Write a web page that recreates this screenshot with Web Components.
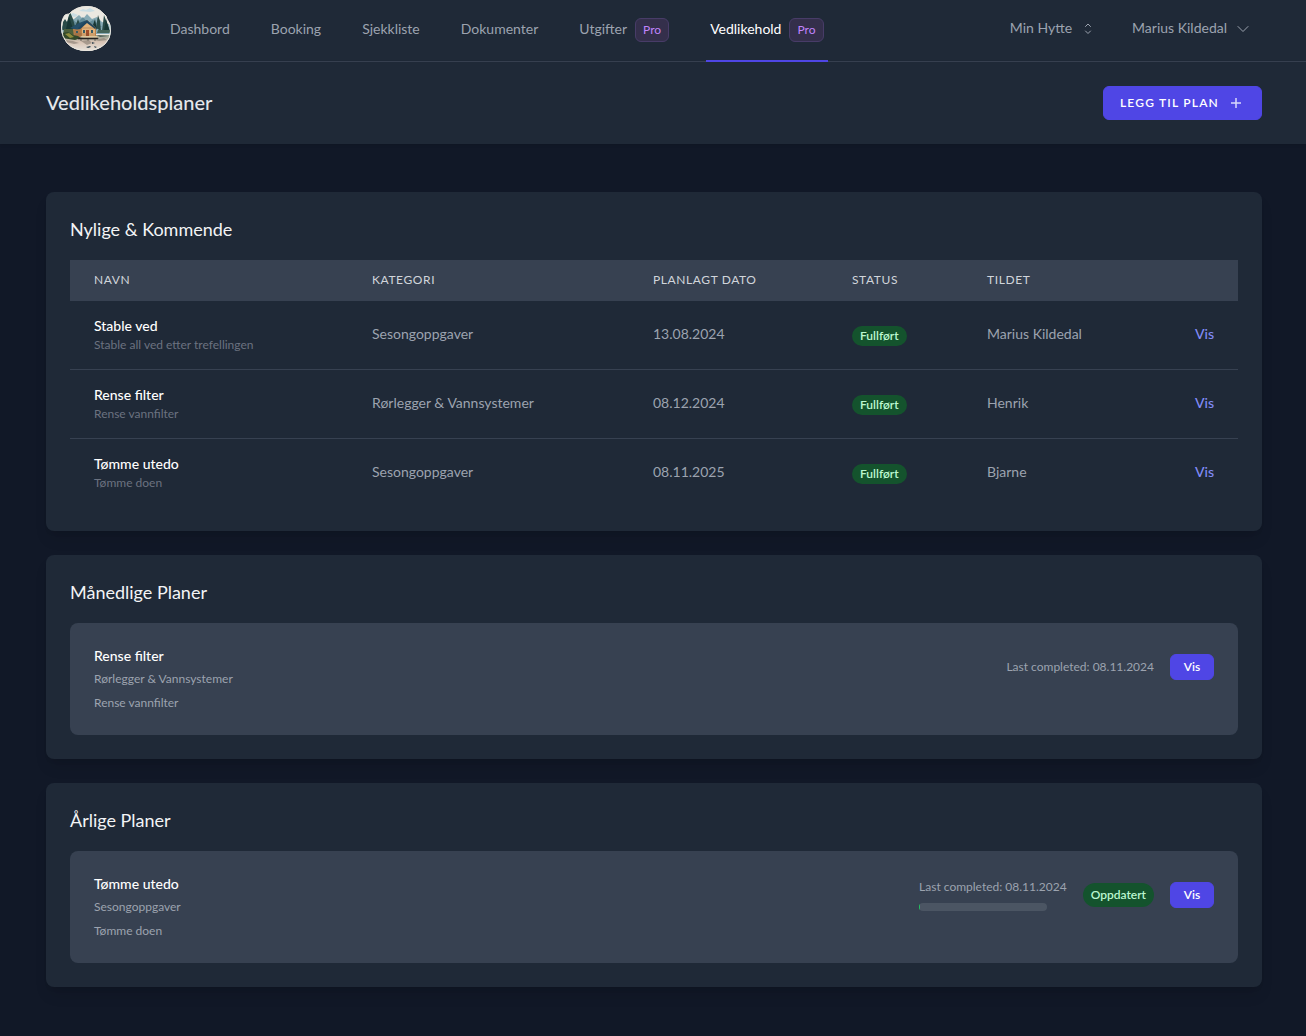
<!DOCTYPE html>
<html lang="nb">
<head>
<meta charset="utf-8">
<meta name="viewport" content="width=device-width, initial-scale=1">
<title>Vedlikeholdsplaner</title>
<style>
:root{--bg:#111827;--surface:#1f2937;--raised:#374151;--line:#374151;--accent:#4f46e5;--muted:#9ca3af;--dim:#6b7280;--text:#f3f4f6}
*{box-sizing:border-box}
body{margin:0;background:var(--bg);color:var(--text);font-family:Lato,"Open Sans",sans-serif;font-size:14px;line-height:20px;min-height:100vh}
main{display:flex;flex-direction:column;gap:24px;padding:48px 44px 48px 46px}
</style>
</head>
<body>
<site-nav>
  <nav-link>Dashbord</nav-link>
  <nav-link>Booking</nav-link>
  <nav-link>Sjekkliste</nav-link>
  <nav-link>Dokumenter</nav-link>
  <nav-link pro>Utgifter</nav-link>
  <nav-link pro active>Vedlikehold</nav-link>
  <menu-button slot="end" icon="updown">Min Hytte</menu-button>
  <menu-button slot="end" icon="down">Marius Kildedal</menu-button>
</site-nav>
<page-header>Vedlikeholdsplaner<add-button slot="action">Legg til plan</add-button></page-header>
<main>
  <panel-card heading="Nylige &amp; Kommende"><plan-table></plan-table></panel-card>
  <panel-card heading="Månedlige Planer">
    <plan-item name="Rense filter" category="Rørlegger &amp; Vannsystemer" note="Rense vannfilter" completed="08.11.2024"></plan-item>
  </panel-card>
  <panel-card heading="Årlige Planer">
    <plan-item name="Tømme utedo" category="Sesongoppgaver" note="Tømme doen" completed="08.11.2024" progress="1" status="Oppdatert"></plan-item>
  </panel-card>
</main>
<script>
const base = '*{box-sizing:border-box}';
class Base extends HTMLElement {
  connectedCallback() {
    if (this.shadowRoot) return;
    this.attachShadow({mode: 'open'}).innerHTML = '<style>' + base + '</style>' + this.render();
  }
}

customElements.define('cabin-logo', class extends Base {
  render() { return `<style>:host{display:block;width:50px;height:46px}svg{display:block}</style>
<svg width="50" height="46" viewBox="0 0 50 46" role="img" aria-label="Hytte">
  <defs>
    <clipPath id="c"><path d="M8 8Q15 0 26 0Q36 0 42 7Q46 10 46 13Q50 17 50 25Q50 32 44 38Q37 45 26 45Q13 45 6 37Q0 30 0 22Q0 13 4 9Q6 8 8 8Z"/></clipPath>
    <linearGradient id="w" x1="0" y1="0" x2="0" y2="1"><stop offset="0" stop-color="#8e9c8c"/><stop offset=".4" stop-color="#d8c3b4"/><stop offset="1" stop-color="#e9e6e0"/></linearGradient>
  </defs>
  <g clip-path="url(#c)">
    <rect width="50" height="46" fill="#ebe8e1"/>
    <path d="M18 5l4-2 3 1 4-2 5 3-5 1zM7 10l5-3 5 2-3 2z" fill="#c9dde3"/>
    <path d="M0 21l8-7 5-1 5-4 4 4 4-5 5 5 5-2 5 5 9 3v9H0z" fill="#87aab5"/>
    <path d="M7 20l5-6 4 3 6-6 5 6 5-3 9 7z" fill="#638b98"/>
    <path d="M2 16l2-3 2 3 3-10 3 7 3 11H1zM14 21l3-8 3 8zM35 22l2-13 2 6 1 10zM41 25l2-16 3 8 3 9z" fill="#294a47"/>
    <path d="M5 23l3-13 4 13zM43 25l2-12 4 13zM32 19l2-6 2 11z" fill="#183735"/>
    <path d="M3 23h12l3 8H2z" fill="#4c5f3c"/>
    <path d="M37 24h12v3H36z" fill="#46655a"/>
    <rect x="1" y="29" width="48" height="17" fill="url(#w)"/>
    <path d="M12 23l7-3 7-6 9 8v9H13z" fill="#bd8148"/>
    <path d="M21 22l5-6 8 6v9H21z" fill="#e2b27a"/>
    <path d="M9 22l9-5 8-3-6 8-3 2z" fill="#264f68"/>
    <path d="M17 22l9-8 9 8-1 1-8-6-8 7z" fill="#1e4660"/>
    <path d="M13 24l7-1v7h-7z" fill="#b07a4a"/>
    <path d="M25 24h3v6h-3z" fill="#a24d29"/>
    <path d="M30 24h2v3h-2zM22 24h2v3h-2zM15 25h2v2h-2z" fill="#385b63"/>
    <path d="M14 28h20M14 30h20M21 22h12" stroke="#7c5335" stroke-width=".4"/>
    <path d="M1 27l6-1 5 3 5 1 3 2-6 2-13-2z" fill="#33492a"/>
    <path d="M4 28l4-1 5 4-4 1z" fill="#8e8c3d"/>
    <path d="M19 30h17l1 2-13 1z" fill="#dec79e"/>
    <path d="M17 32h20v1H17zM20 33v2M27 33v2M34 33v2" stroke="#413e36" stroke-width=".7"/>
    <path d="M4 34l8 1 6 2-5 1-8-2zM20 35l8-1 3 3-5 2zM34 34l9-2 3 2-8 1z" fill="#8c8176" opacity=".65"/>
    <path d="M25 41l4-1 1 1-3 1zM33 40l3 1-2 1zM31 36l3 1-3 1z" fill="#354752"/>
    <path d="M36 29l11 1-8 1zM41 32l5 1" fill="#546158"/>
  </g>
  <path d="M8 8Q15 .5 26 .5Q36 .5 42 7Q46 10 46 13Q49.500 17 49.500 25Q49.500 32 44 38Q37 44.500 26 44.500Q13 44.500 6 37Q.5 30 .5 22Q.5 13 4 9Q6 8 8 8Z" fill="none" stroke="#e9e5dd"/>
</svg>`; }
});

customElements.define('site-nav', class extends Base {
  render() { return `<style>
:host{display:block;background:var(--surface);border-bottom:1px solid var(--line)}
nav{display:flex;height:61px;padding:0 51px 0 61px}
.logo{padding-top:6px;margin-right:55px}
.links{display:flex;gap:33px}
.end{display:flex;align-items:center;gap:28px;margin-left:auto;padding-bottom:6px}
</style><nav aria-label="Hovedmeny"><cabin-logo class="logo"></cabin-logo><div class="links"><slot></slot></div><div class="end"><slot name="end"></slot></div></nav>`; }
});

customElements.define('nav-link', class extends Base {
  render() { const on = this.hasAttribute('active'); return `<style>
:host{display:flex}
a{display:flex;align-items:center;gap:8px;height:62px;padding:0 4px 2px;color:${on ? '#fff' : 'var(--muted)'};text-decoration:none;border-top:2px solid transparent;border-bottom:2px solid ${on ? 'var(--accent)' : 'transparent'};white-space:nowrap}
.label{padding-bottom:2px}
.pro{font-size:12px;line-height:16px;padding:3px 7px;border:1px solid #483c68;border-radius:6px;background:#342f4b;color:#c084fc}
</style><a href="#"${on ? ' aria-current="page"' : ''}><span class="label"><slot></slot></span>${this.hasAttribute('pro') ? '<span class="pro">Pro</span>' : ''}</a>`; }
});

customElements.define('menu-button', class extends Base {
  render() { const ud = this.getAttribute('icon') === 'updown'; return `<style>
:host{display:block}
button{display:flex;align-items:center;gap:8px;border:0;background:none;color:var(--muted);font:inherit;padding:0 4px;white-space:nowrap}
svg{display:block;fill:none;stroke:currentColor;stroke-width:1;stroke-linecap:round;stroke-linejoin:round}
</style><button type="button" aria-haspopup="menu"><slot></slot>${ud
  ? '<svg width="16" height="16" viewBox="0 0 16 16"><path d="M5.500 6.500L8 4l2.500 2.500M5.500 11L8 13.500l2.500-2.500"/></svg>'
  : '<svg width="16" height="16" viewBox="0 0 16 16"><path d="M3 6.500l5 5 5-5"/></svg>'}</button>`; }
});

customElements.define('page-header', class extends Base {
  render() { return `<style>
:host{display:flex;align-items:center;justify-content:space-between;padding:24px 44px 24px 46px;background:var(--surface);box-shadow:0 1px 3px rgba(0,0,0,.1)}
h1{margin:0;padding-bottom:2px;font-size:20px;line-height:24px;font-weight:500;color:#e5e7eb}
</style><h1><slot></slot></h1><slot name="action"></slot>`; }
});

customElements.define('add-button', class extends Base {
  render() { return `<style>
:host{display:block}
button{display:flex;align-items:center;gap:8px;padding:8px 16px;border:1px solid var(--accent);border-radius:6px;background:var(--accent);color:#fff;font:inherit;font-size:12px;line-height:16px;font-weight:600;letter-spacing:.1em;text-transform:uppercase}
svg{display:block;fill:none;stroke:#d9d7fb;stroke-width:1.5}
</style><button type="button"><slot></slot><svg width="18" height="16" viewBox="0 0 18 16"><path d="M9 3v10M4 8h10"/></svg></button>`; }
});

customElements.define('panel-card', class extends Base {
  render() { return `<style>
:host{display:block;padding:24px;border-radius:8px;background:var(--surface);box-shadow:0 10px 15px -3px rgba(0,0,0,.1),0 4px 6px -4px rgba(0,0,0,.1)}
h2{margin:0 0 18px;font-size:18px;line-height:26px;font-weight:400}
</style><h2>${this.getAttribute('heading').replace('&', '&amp;')}</h2><slot></slot>`; }
});

customElements.define('status-badge', class extends Base {
  render() { return `<style>
:host{display:inline-block;padding:2px 8px;border-radius:12px;background:#14532d;color:#bbf7d0;font-size:12px;line-height:16px;font-weight:600;white-space:nowrap}
:host([large]){padding:4px 8px}
</style><slot></slot>`; }
});

customElements.define('plan-table', class extends Base {
  render() {
    const rows = [
      ['Stable ved', 'Stable all ved etter trefellingen', 'Sesongoppgaver', '13.08.2024', 'Marius Kildedal'],
      ['Rense filter', 'Rense vannfilter', 'Rørlegger &amp; Vannsystemer', '08.12.2024', 'Henrik'],
      ['Tømme utedo', 'Tømme doen', 'Sesongoppgaver', '08.11.2025', 'Bjarne']];
    return `<style>
:host{display:block}
table{width:100%;table-layout:fixed;border-collapse:separate;border-spacing:0}
th{padding:12px 24px;background:var(--raised);border-bottom:1px solid var(--line);text-align:left;font-size:12px;line-height:16px;font-weight:400;letter-spacing:.05em;text-transform:uppercase;color:#d1d5db;white-space:nowrap}
td{padding:15px 24px 17px;color:var(--muted);vertical-align:middle;white-space:nowrap}
td:first-child,td.badge{padding-bottom:15px}
tr:not(:last-child) td{border-bottom:1px solid var(--line)}
.name{color:#fff;font-weight:500}
.sub{margin:1px 0;color:var(--dim);font-size:12px;line-height:16px}
status-badge{vertical-align:middle}
.act{text-align:right}
a{color:#818cf8;font-weight:500;text-decoration:none}
</style><table>
<colgroup><col style="width:278px"><col style="width:281px"><col style="width:199px"><col style="width:135px"><col style="width:183px"><col style="width:92px"></colgroup>
<thead><tr><th>Navn</th><th>Kategori</th><th>Planlagt dato</th><th>Status</th><th>Tildet</th><th></th></tr></thead>
<tbody>${rows.map(r => `<tr><td><div class="name">${r[0]}</div><div class="sub">${r[1]}</div></td><td>${r[2]}</td><td>${r[3]}</td><td class="badge"><status-badge>Fullført</status-badge></td><td>${r[4]}</td><td class="act"><a href="#">Vis</a></td></tr>`).join('')}</tbody></table>`;
  }
});

customElements.define('plan-item', class extends Base {
  render() {
    const a = n => (this.getAttribute(n) || '').replace('&', '&amp;');
    return `<style>
:host{display:block;padding:24px;border-radius:8px;background:var(--raised);font-size:12px;line-height:16px;color:var(--muted)}
.top{display:flex;align-items:center;justify-content:space-between}
h3{margin:0;font-size:14px;line-height:18px;font-weight:500;color:#fff}
p{margin:0}.cat{margin-top:6px}.note{margin-top:8px}
.side{display:flex;align-items:center;gap:16px}
.bar{width:128px;height:8px;margin-top:8px;border-radius:4px;background:#4b5563;overflow:hidden}
.fill{height:8px;background:#22c55e}
button{min-width:44px;border:1px solid var(--accent);border-radius:6px;padding:4px 12px;background:var(--accent);color:#fff;font:inherit;font-weight:600}
</style><div class="top"><div><h3>${a('name')}</h3><p class="cat">${a('category')}</p></div>
<div class="side"><div><p>Last completed: ${a('completed')}</p>${a('progress') ? `<div class="bar" role="progressbar" aria-label="Fremdrift" aria-valuenow="${a('progress')}" aria-valuemin="0" aria-valuemax="100"><div class="fill" style="width:${a('progress')}%"></div></div>` : ''}</div>
${a('status') ? `<status-badge large>${a('status')}</status-badge>` : ''}<button type="button">Vis</button></div></div>
<p class="note">${a('note')}</p>`;
  }
});
</script>
</body>
</html>
